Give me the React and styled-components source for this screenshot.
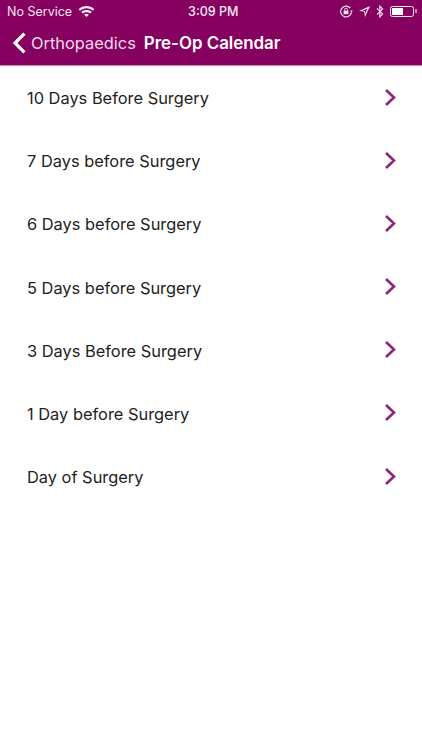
import React from "react";
import styled, { createGlobalStyle } from "styled-components";

const days = [
    "10 Days Before Surgery",
    "7 Days before Surgery",
    "6 Days before Surgery",
    "5 Days before Surgery",
    "3 Days Before Surgery",
    "1 Day before Surgery",
    "Day of Surgery",
];

const App = () => {
    return (
        <React.Fragment>
            <GlobalStyle />
            <Page>
                <Header>
                    <StatusBar>
                        <StatusLeft>
                            <span>No Service</span>
                            <svg width="17" height="12" viewBox="0 0 17 12">
                                <path d="M0.6 4.2 C5 0 12 0 16.4 4.2 L14.9 5.8 C11.3 2.4 5.7 2.4 2.1 5.8 Z" fill="#f6e6f1" />
                                <path d="M3.3 7 C6 4.4 11 4.4 13.7 7 L12.2 8.5 C10.2 6.7 6.8 6.7 4.8 8.5 Z" fill="#f6e6f1" />
                                <path d="M6 9.6 C7.4 8.5 9.6 8.5 11 9.6 L8.5 12 Z" fill="#f6e6f1" />
                            </svg>
                        </StatusLeft>
                        <StatusTime>3:09 PM</StatusTime>
                        <StatusRight>
                            <svg width="14" height="13" viewBox="0 0 14 13" fill="none">
                                <path d="M12.4 7.4 A5.4 5.4 0 1 1 11.2 3" stroke="#f6e6f1" strokeWidth="1.2" />
                                <path d="M11.2 5.6 L13.8 5.6 L12.5 7.8 Z" fill="#f6e6f1" />
                                <rect x="4.6" y="5.6" width="4.8" height="3.6" fill="#f6e6f1" />
                                <path d="M5.6 5.6 V4.6 A1.4 1.4 0 0 1 8.4 4.6 V5.6" stroke="#f6e6f1" strokeWidth="0.9" />
                            </svg>
                            <svg width="11" height="11" viewBox="0 0 11 11">
                                <path d="M11 0 L0 5 L5.2 5.6 L6 11 Z" fill="#f6e6f1" />
                                <path d="M8.4 2.5 L3.6 4.7 L6 5 L6.4 7.4 Z" fill="#85005f" />
                            </svg>
                            <svg width="8" height="13" viewBox="0 0 8 13" fill="none">
                                <path d="M1 3.4 L6.6 9 L3.8 12 V1 L6.6 4 L1 9.6" stroke="#f6e6f1" strokeWidth="1.1" />
                            </svg>
                            <Battery>
                                <BatteryLevel />
                            </Battery>
                            <BatteryTip />
                        </StatusRight>
                    </StatusBar>
                    <NavBar>
                        <BackIcon width="15" height="24" viewBox="0 0 15 24" fill="none">
                            <path d="M12.4 2.6 L3 12 L12.4 21.4" stroke="#fff" strokeWidth="3.2" />
                        </BackIcon>
                        <BackLabel>Orthopaedics</BackLabel>
                        <NavTitle>Pre-Op Calendar</NavTitle>
                    </NavBar>
                </Header>
                <List>
                    {days.map((day) => (
                        <Row key={day}>
                            <RowLabel>{day}</RowLabel>
                            <Chevron width="13" height="19" viewBox="0 0 13 19" fill="none">
                                <path d="M2 2 L10 9.5 L2 17" stroke="#8f2478" strokeWidth="2.6" />
                            </Chevron>
                        </Row>
                    ))}
                </List>
            </Page>
        </React.Fragment>
    );
};

export default App;

const GlobalStyle = createGlobalStyle`
    body {
        margin: 0;
        background-color: #FFFFFF;
        font-family: "Liberation Sans", Arial, sans-serif;
    }
`;

const Page = styled.div`
    width: 422px;
    height: 750px;
    overflow: hidden;
    background-color: #FFFFFF;
`;

const Header = styled.div`
    height: 65px;
    background-color: #85005f;
    color: #FFFFFF;
    border-bottom: 1px solid #c48ab3;
`;

const StatusBar = styled.div`
    height: 22px;
    padding: 0 5.5px 0 7px;
    display: grid;
    grid-template-columns: 1fr auto 1fr;
    align-items: center;
    font-family: "Inter", sans-serif;
    font-size: 12.5px;
    color: #f6e6f1;
`;

const StatusLeft = styled.div`
    display: flex;
    align-items: center;
    gap: 6px;
`;

const StatusTime = styled.div`
    margin-left: 3px;
    font-weight: 500;
`;

const StatusRight = styled.div`
    display: flex;
    align-items: center;
    justify-content: flex-end;
    gap: 6px;
`;

const Battery = styled.div`
    width: 24px;
    height: 11px;
    box-sizing: border-box;
    border: 1px solid #f6e6f1;
    border-radius: 2.5px;
    padding: 1px;
`;

const BatteryLevel = styled.div`
    width: 55%;
    height: 100%;
    background-color: #FFFFFF;
`;

const BatteryTip = styled.div`
    width: 1.5px;
    height: 4px;
    margin-left: -5px;
    background-color: #c48ab3;
`;

const NavBar = styled.div`
    height: 41px;
    padding: 0 0 2px 12px;
    display: flex;
    align-items: center;
`;

const BackIcon = styled.svg`
    margin-right: 4px;
`;

const BackLabel = styled.span`
    font-family: "Inter", sans-serif;
    font-size: 16.4px;
    color: #f3dcec;
`;

const NavTitle = styled.span`
    margin-left: 8px;
    font-family: "Inter", sans-serif;
    font-size: 16.9px;
    font-weight: 600;
`;

const List = styled.div`
    display: flex;
    flex-direction: column;
`;

const Row = styled.div`
    height: 63.17px;
    padding: 0 25px 0 27px;
    display: flex;
    align-items: center;
    justify-content: space-between;
`;

const RowLabel = styled.span`
    margin-top: 1px;
    font-family: "Inter", sans-serif;
    font-size: 16.4px;
    color: #222222;
`;

const Chevron = styled.svg`
    margin-bottom: 1px;
`;
